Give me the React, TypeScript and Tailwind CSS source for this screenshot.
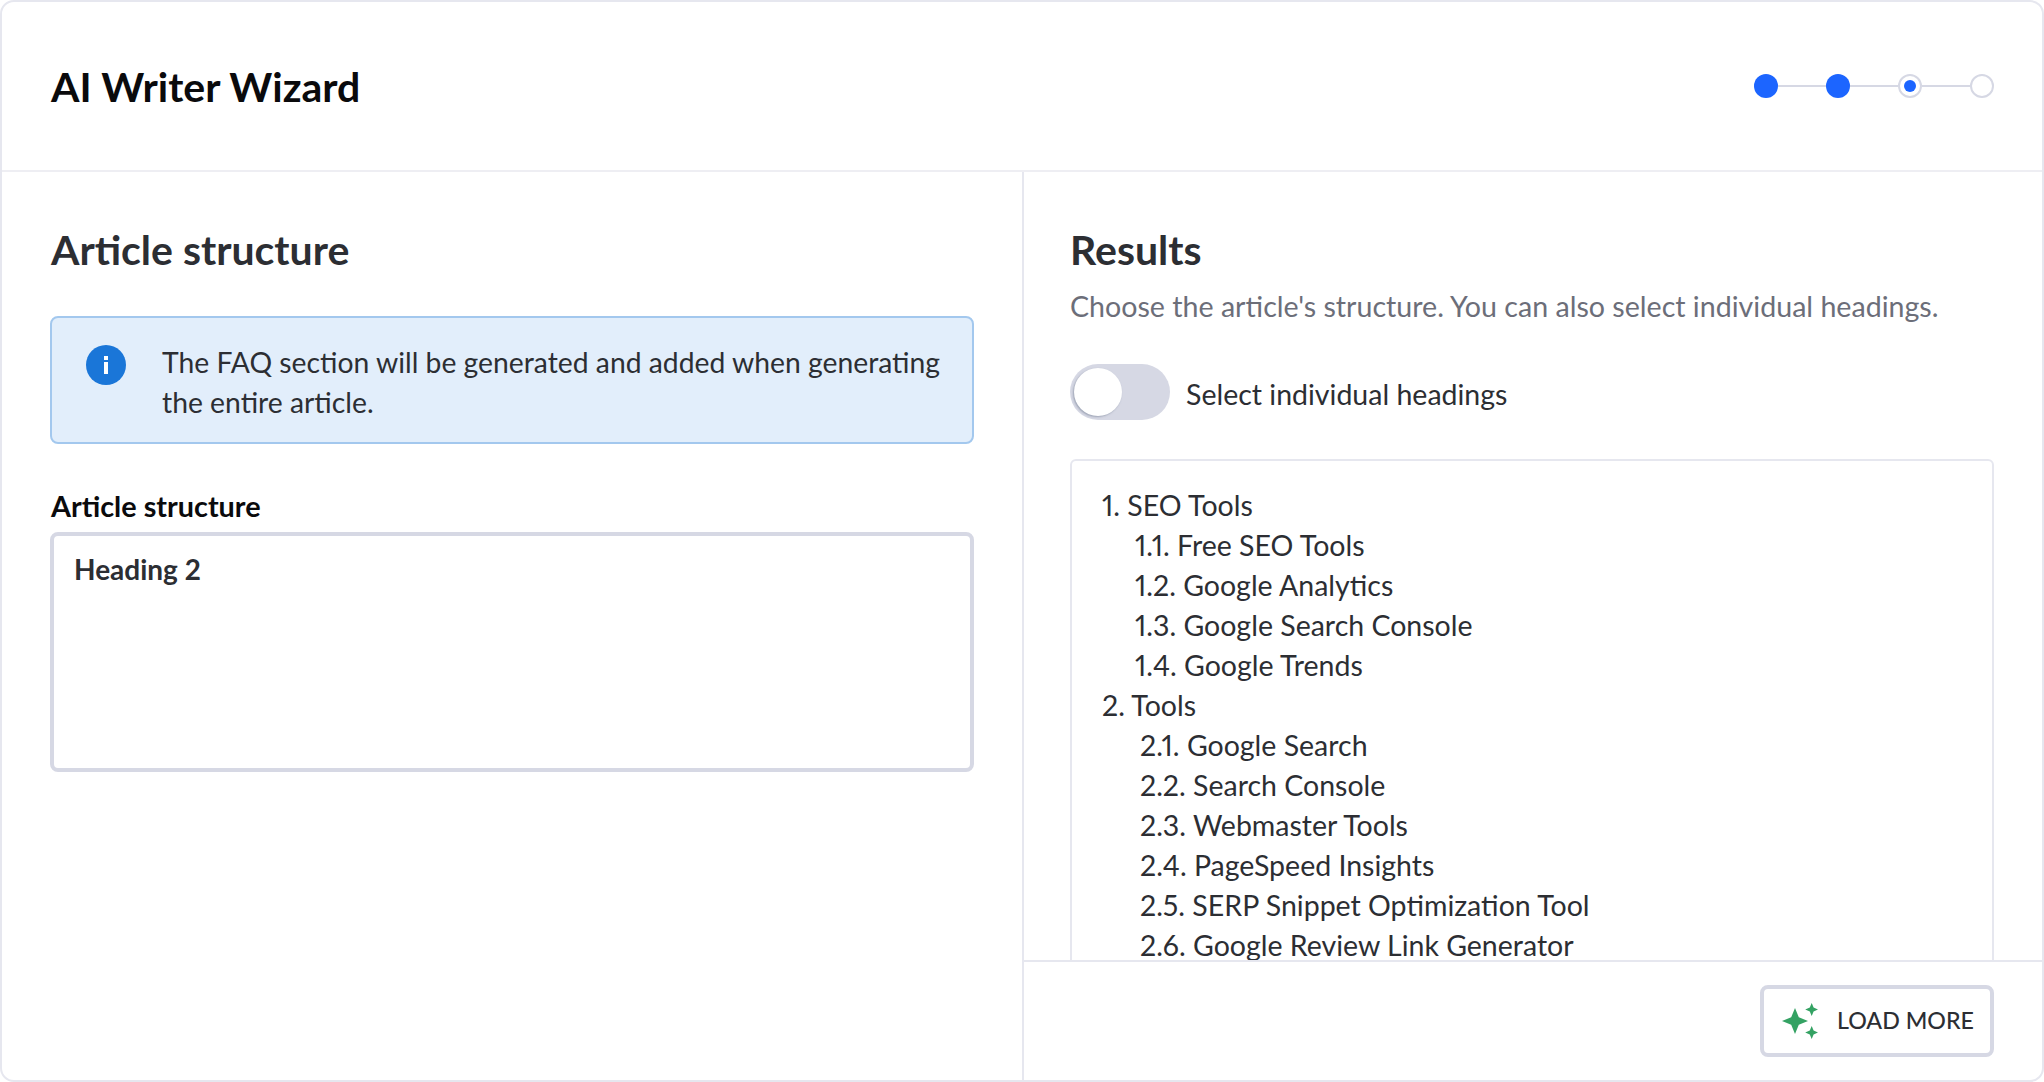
import React from 'react';

const headings = [
  { label: '1. SEO Tools', indent: 'pl-0' },
  { label: '1.1. Free SEO Tools', indent: 'pl-[33px]' },
  { label: '1.2. Google Analytics', indent: 'pl-[33px]' },
  { label: '1.3. Google Search Console', indent: 'pl-[33px]' },
  { label: '1.4. Google Trends', indent: 'pl-[33px]' },
  { label: '2. Tools', indent: 'pl-0' },
  { label: '2.1. Google Search', indent: 'pl-[38px]' },
  { label: '2.2. Search Console', indent: 'pl-[38px]' },
  { label: '2.3. Webmaster Tools', indent: 'pl-[38px]' },
  { label: '2.4. PageSpeed Insights', indent: 'pl-[38px]' },
  { label: '2.5. SERP Snippet Optimization Tool', indent: 'pl-[38px]' },
  { label: '2.6. Google Review Link Generator', indent: 'pl-[38px]' },
];

const Stepper = () => (
  <div className="flex items-center">
    <div className="w-6 h-6 rounded-full bg-[#1c65ff]" />
    <div className="w-12 h-0.5 bg-[#d6d8e4]" />
    <div className="w-6 h-6 rounded-full bg-[#1c65ff]" />
    <div className="w-12 h-0.5 bg-[#d6d8e4]" />
    <div className="w-6 h-6 rounded-full border-2 border-[#d6d8e4] flex items-center justify-center">
      <div className="w-3 h-3 rounded-full bg-[#1c65ff]" />
    </div>
    <div className="w-12 h-0.5 bg-[#d6d8e4]" />
    <div className="w-6 h-6 rounded-full border-2 border-[#d6d8e4]" />
  </div>
);

const Sparkles = () => (
  <svg width="36" height="36" viewBox="0 0 36 36" fill="#34a263">
    <path d="M13 5 L16.8 14.2 L26 18 L16.8 21.8 L13 31 L9.2 21.8 L0 18 L9.2 14.2 Z" />
    <path d="M29.7 0 L31.6 4.6 L36.2 6.5 L31.6 8.4 L29.7 13 L27.8 8.4 L23.2 6.5 L27.8 4.6 Z" />
    <path d="M29.7 23 L31.6 27.6 L36.2 29.5 L31.6 31.4 L29.7 36 L27.8 31.4 L23.2 29.5 L27.8 27.6 Z" />
  </svg>
);

export default function App() {
  return (
    <div className="w-[2044px] h-[1082px] bg-white font-['Lato',sans-serif] text-[#2c2e33] overflow-hidden proportional-nums">
      <div className="h-full flex flex-col border-2 border-[#e6e7ef] rounded-[14px] overflow-hidden">
        {/* Header */}
        <div className="h-[170px] shrink-0 flex items-center justify-between pl-[49px] pr-[48px] border-b-2 border-[#eeeef3]">
          <h1 className="text-[41px] font-bold text-[#0a0a0c] pt-[2px]">AI Writer Wizard</h1>
          <Stepper />
        </div>

        <div className="flex-1 flex min-h-0">
          {/* Left column */}
          <div className="w-[1022px] shrink-0 border-r-2 border-[#e6e7ef] pl-[48px] pr-[48px] pt-[55px]">
            <h2 className="text-[41px] leading-[46px] font-bold pl-px">Article structure</h2>
            <div className="mt-[43px] h-[128px] flex gap-[37px] pl-[34px] pr-4 pt-[24px] bg-[#e2eefb] border-2 border-[#a3c8ee] rounded-lg">
              <div className="w-10 h-10 mt-[3px] shrink-0 rounded-full bg-[#1a76d8] flex flex-col items-center justify-center gap-[2px]">
                <div className="w-1 h-1 bg-white" />
                <div className="w-1 h-3 bg-white" />
              </div>
              <p className="text-[28.3px] leading-10 -ml-px">The FAQ section will be generated and added when generating the entire article.</p>
            </div>
            <div className="mt-[44px] text-[28.8px] leading-[36px] font-bold text-[#0a0a0c] pl-px">Article structure</div>
            <div className="mt-[8px] h-[240px] border-4 border-[#d6d8e4] rounded-lg px-[20px] py-[13px] text-[28px] leading-10 font-bold">
              Heading 2
            </div>
          </div>

          {/* Right column */}
          <div className="flex-1 min-w-0 flex flex-col">
            <div className="flex-1 min-h-0 overflow-hidden pl-[46px] pr-[48px] pt-[55px]">
              <h2 className="text-[41px] leading-[46px] font-bold">Results</h2>
              <p className="mt-[13px] text-[28.6px] leading-10 text-[#6c6e79]">Choose the article's structure. You can also select individual headings.</p>
              <div className="mt-[38px] flex items-center gap-4">
                <div className="w-[100px] h-14 rounded-full bg-[#d6d8e4] flex items-center pl-1">
                  <div className="w-12 h-12 rounded-full bg-white shadow-[-1px_1px_2px_rgba(120,130,150,0.6)]" />
                </div>
                <span className="text-[28.5px] leading-10 pt-[3px]">Select individual headings</span>
              </div>
              <div className="mt-[39px] border-2 border-[#e6e7ef] rounded-md pl-[30px] pt-[24px] text-[28.5px] leading-10">
                {headings.map((h) => (
                  <div key={h.label} className={h.indent}>{h.label}</div>
                ))}
              </div>
            </div>
            <div className="h-[120px] shrink-0 flex items-center justify-end pr-[48px] border-t-2 border-[#e6e7ef]">
              <button className="w-[234px] h-[72px] -mt-px flex items-center gap-[19px] pl-[18px] bg-white border-4 border-[#d6d8e4] rounded-lg text-[23.2px] font-medium">
                <Sparkles />
                LOAD MORE
              </button>
            </div>
          </div>
        </div>
      </div>
    </div>
  );
}
